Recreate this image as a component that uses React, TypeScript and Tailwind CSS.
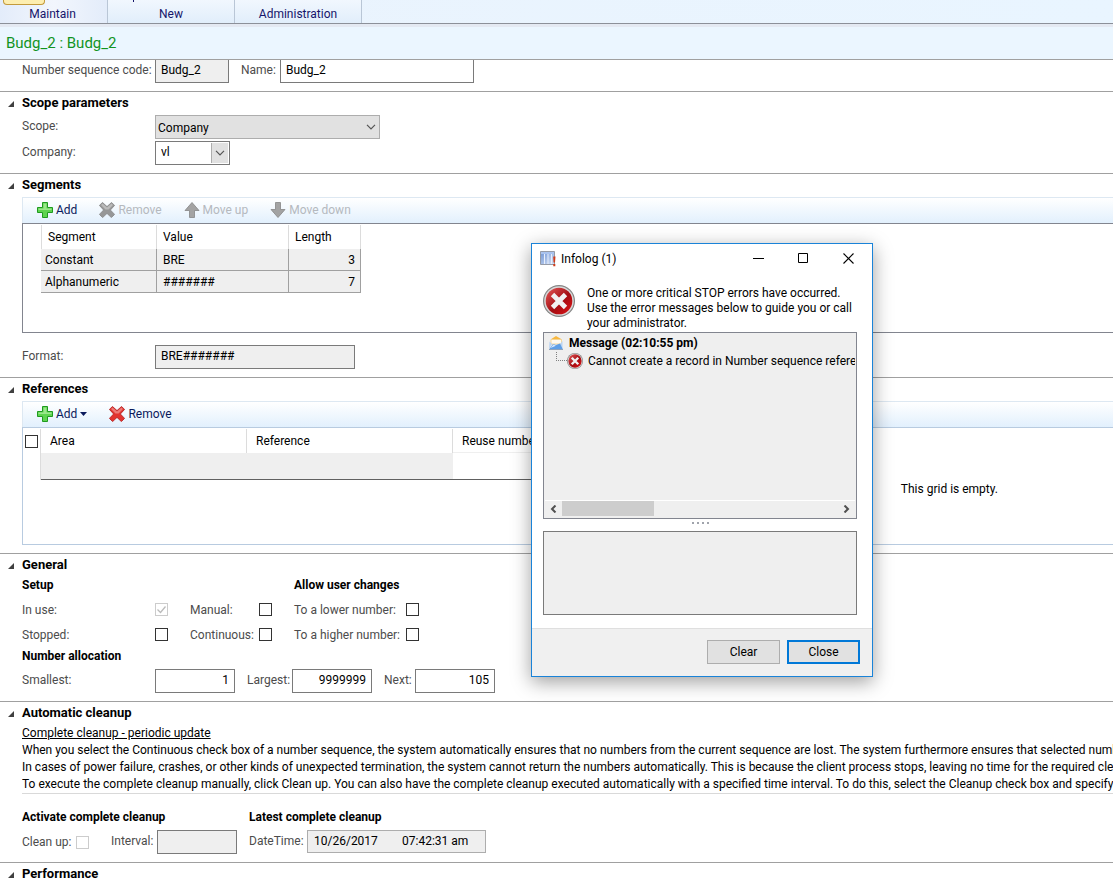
import { useState } from 'react';
import type { ReactNode } from 'react';

const segments = [
    { segment: 'Constant', value: 'BRE', length: 3 },
    { segment: 'Alphanumeric', value: '#######', length: 7 },
];

const cleanupText = [
    'When you select the Continuous check box of a number sequence, the system automatically ensures that no numbers from the current sequence are lost. The system furthermore ensures that selected numbers',
    'In cases of power failure, crashes, or other kinds of unexpected termination, the system cannot return the numbers automatically. This is because the client process stops, leaving no time for the required cleanup',
    'To execute the complete cleanup manually, click Clean up. You can also have the complete cleanup executed automatically with a specified time interval. To do this, select the Cleanup check box and specify a',
];

const inputClass = 'h-6 border border-[#7a7a7a] px-[5px] pb-[2px] text-black outline-none';

function PlusIcon() {
    return (
        <svg width="16" height="16" viewBox="0 0 16 16">
            <path d="M5.5.5h5v5h5v5h-5v5h-5v-5h-5v-5h5z" fill="#5fd44f" stroke="#1f9a1f" />
            <path d="M6.5 1.5h3v5h5v1.5h-13v-1.5h5z" fill="#b5f0a5" opacity=".7" />
        </svg>
    );
}

function CrossIcon({ disabled }: { disabled?: boolean }) {
    return (
        <svg width="16" height="16" viewBox="0 0 16 16">
            <path
                d="M3.5.5 8 4.600 12.500.5 15.600 3.400 11.400 8l4.200 4.400-3.200 3.200L8 11.400l-4.400 4.200-3.200-3.200L4.600 8 .4 3.400z"
                fill={disabled ? '#979797' : '#e2332f'}
                stroke={disabled ? '#858585' : '#b01d1d'}
                strokeWidth=".8"
                strokeLinejoin="round"
            />
            <path d="M3.500 1.500 8 5.600l4.500-4.100 1.500 1.500-4.500 4.500h-3L2 3z" fill="#fff" opacity=".35" />
        </svg>
    );
}

function ArrowIcon({ down }: { down?: boolean }) {
    return (
        <svg width="16" height="16" viewBox="0 0 16 16">
            <path
                d={down ? 'M5.500.5h5v7h4.500L8 15.500 1 7.500h4.500z' : 'M5.500 15.500h5v-7h4.500L8 .5 1 8.500h4.500z'}
                fill="#a3a3a3"
                stroke="#858585"
                strokeWidth=".8"
            />
        </svg>
    );
}

function StopIcon({ size }: { size: number }) {
    return (
        <svg width={size} height={size} viewBox="0 0 32 32" className="shrink-0">
            <defs>
                <linearGradient id={`stop${size}`} x1="0" y1="0" x2="1" y2="1">
                    <stop offset="0" stopColor="#e65a5a" />
                    <stop offset=".55" stopColor="#a30d12" />
                    <stop offset="1" stopColor="#e01216" />
                </linearGradient>
            </defs>
            <circle cx="16" cy="16" r="16" fill="#858585" />
            <circle cx="16" cy="16" r="14.800" fill="#d9d9d9" />
            <circle cx="16" cy="16" r="13.300" fill={`url(#stop${size})`} />
            <path d="m9.500 9.500 13 13M22.500 9.500l-13 13" stroke="#f1f1f1" strokeWidth="4.800" />
        </svg>
    );
}

function LogIcon() {
    return (
        <svg width="16" height="16" viewBox="0 0 16 16">
            <defs>
                <linearGradient id="log" x1="0" y1="0" x2="1" y2="1">
                    <stop offset="0" stopColor="#6f93d2" />
                    <stop offset="1" stopColor="#d6e3f8" />
                </linearGradient>
            </defs>
            <path d="M.5.5h14v13H.5z" fill="url(#log)" stroke="#969ba6" />
            <path d="M1 1h13v2H1z" fill="#a9c3ef" />
            <path d="M4.500 3v10M8 3v10M11.500 3v10" stroke="#e8effb" />
            <path d="M13.200 5.500h2.300L15 11.500h-1.500zM13.300 13h2v2.200h-2z" fill="#cf3d1c" />
        </svg>
    );
}

function MessageIcon() {
    return (
        <svg width="16" height="16" viewBox="0 0 16 16" className="shrink-0">
            <path d="M2.500 4.500 8 1l6 3.500z" fill="#f7b73f" />
            <path d="M3 4.500h10.500V9H3z" fill="#fffaf0" stroke="#f2cf86" strokeWidth=".8" />
            <path d="m1.500 6.500 2.500 2.500-3 5zM14.500 6v7.500L12 9z" fill="#b9d3f3" />
            <path d="M1 14.500 5 9l3 1 4-1.500 3 6z" fill="#5f9fe6" />
            <path d="M2.500 13 5.500 9.500 8 10.800l3-1.300z" fill="#d9eaff" />
            <path d="M1 14.500h14" stroke="#8fa3bb" />
        </svg>
    );
}

function Chevron({ className }: { className?: string }) {
    return (
        <svg width="10" height="6" viewBox="0 0 10 6" className={className}>
            <path d="m1 .8 4 4 4-4" fill="none" stroke="#555" strokeWidth="1.200" />
        </svg>
    );
}

function Section({ title, children }: { title: string; children?: ReactNode }) {
    return (
        <section className="border-t border-[#a0a0a0] pb-2">
            <h2 className="flex h-5 items-center gap-2 pt-[2px] pl-2 text-[13px] font-bold text-black">
                <svg width="6" height="6" viewBox="0 0 6 6" className="mt-[2px]">
                    <path d="M6 0v6H0z" fill="#404040" />
                </svg>
                {title}
            </h2>
            <div className="pl-[22px]">{children}</div>
        </section>
    );
}

type CheckBoxProps = { id: string; label?: string; disabled?: boolean; defaultChecked?: boolean };

function CheckBox({ id, label, disabled, defaultChecked }: CheckBoxProps) {
    return (
        <span className="grid size-[13px] shrink-0">
            <input
                id={id}
                type="checkbox"
                aria-label={label}
                disabled={disabled}
                defaultChecked={defaultChecked}
                className="peer col-start-1 row-start-1 size-[13px] appearance-none border border-[#333] bg-white disabled:border-[#ccc]"
            />
            <svg
                viewBox="0 0 13 13"
                className="pointer-events-none invisible col-start-1 row-start-1 size-[13px] text-[#333] peer-checked:visible peer-disabled:text-[#bbb]"
            >
                <path d="m2.500 6.500 3 3 5-6" fill="none" stroke="currentColor" strokeWidth="1.300" />
            </svg>
        </span>
    );
}

function ToolButton({ icon, label, disabled, menu }: { icon: ReactNode; label: string; disabled?: boolean; menu?: boolean }) {
    return (
        <button type="button" disabled={disabled} className="flex items-center gap-[3px] text-[#0a1a5c] disabled:text-[#b5b9be]">
            {icon}
            <span>{label}</span>
            {menu && (
                <svg width="7" height="4" viewBox="0 0 7 4">
                    <path d="M0 0h7L3.500 4z" fill="#0a1a5c" />
                </svg>
            )}
        </button>
    );
}

function Toolbar({ children }: { children: ReactNode }) {
    return (
        <div className="mt-[3px] flex h-[26px] items-center gap-[22px] border-t border-l border-[#dde8f2] bg-linear-to-b from-white to-[#e2f0fd] pb-[2px] pl-[14px]">
            {children}
        </div>
    );
}

function Infolog({ onClose }: { onClose: () => void }) {
    return (
        <div
            role="dialog"
            aria-labelledby="infolog-title"
            className="absolute top-[243px] left-[531px] w-[342px] border border-[#1a83d8] bg-white text-black shadow-[0_5px_18px_rgba(0,0,0,0.38)]"
        >
            <div className="flex h-[29px] items-center pr-px pl-2">
                <LogIcon />
                <h1 id="infolog-title" className="ml-[5px] flex-1">Infolog (1)</h1>
                <button type="button" aria-label="Minimize" className="flex w-[45px] justify-center">
                    <svg width="11" height="11" viewBox="0 0 11 11"><path d="M0 5.500h11" stroke="#000" /></svg>
                </button>
                <button type="button" aria-label="Maximize" className="flex w-[45px] justify-center">
                    <svg width="11" height="11" viewBox="0 0 11 11"><path d="M.5.5h9v9h-9z" fill="none" stroke="#000" /></svg>
                </button>
                <button type="button" aria-label="Close window" onClick={onClose} className="flex w-[45px] justify-center">
                    <svg width="11" height="11" viewBox="0 0 11 11"><path d="m.5.5 10 10M10.500.5l-10 10" stroke="#000" strokeWidth="1.100" /></svg>
                </button>
            </div>

            <div className="flex flex-col pr-[15px] pl-[11px]">
                <div className="flex gap-3 pt-3 pb-px">
                    <StopIcon size={32} />
                    <p className="pt-px leading-[15px] whitespace-nowrap">
                        One or more critical STOP errors have occurred.<br />
                        Use the error messages below to guide you or call<br />
                        your administrator.
                    </p>
                </div>

                <div className="flex h-[187px] flex-col border border-[#82858f] bg-[#efefef] px-px pt-px pb-[2px]">
                    <div className="flex h-[18px] items-center gap-[5px] pl-[3px]">
                        <MessageIcon />
                        <span className="font-bold">Message (02:10:55 pm)</span>
                    </div>
                    <div className="flex h-[18px] items-center overflow-hidden pl-[11px] whitespace-nowrap">
                        <span className="mb-[9px] h-[9px] w-[11px] shrink-0 border-b border-l border-dotted border-[#808080]" />
                        <StopIcon size={16} />
                        <span className="ml-[5px]">Cannot create a record in Number sequence references</span>
                    </div>
                    <div className="mt-auto flex h-4 items-center border-t border-white pr-[5px] pl-[5px]">
                        <svg width="7" height="8" viewBox="0 0 7 8"><path d="M5.500.5 2 4l3.500 3.500" fill="none" stroke="#505050" strokeWidth="2" /></svg>
                        <div className="ml-[5px] h-[15px] w-[92px] bg-[#cdcdcd]" />
                        <svg width="7" height="8" viewBox="0 0 7 8" className="ml-auto"><path d="M1.500.5 5 4 1.500 7.500" fill="none" stroke="#505050" strokeWidth="2" /></svg>
                    </div>
                </div>

                <div className="flex h-3 items-center justify-center gap-[3px] pb-1">
                    <i className="size-[2px] bg-[#a0a4ac]" />
                    <i className="size-[2px] bg-[#a0a4ac]" />
                    <i className="size-[2px] bg-[#a0a4ac]" />
                    <i className="size-[2px] bg-[#a0a4ac]" />
                </div>

                <textarea
                    readOnly
                    aria-label="Message details"
                    className="mb-[13px] block h-[84px] w-full resize-none border border-[#7a7a7a] bg-[#efefef] outline-none"
                />
            </div>

            <div className="flex h-12 justify-end gap-[7px] border-t border-[#dfdfdf] bg-[#f0f0f0] pt-[11px] pr-3">
                <button type="button" className="h-6 w-[73px] border border-[#adadad] bg-[#e1e1e1]">Clear</button>
                <button type="button" onClick={onClose} className="h-6 w-[73px] border-2 border-[#0078d7] bg-[#e1e1e1]">Close</button>
            </div>
        </div>
    );
}

export default function App() {
    const [infologOpen, setInfologOpen] = useState(true);

    return (
        <div className="relative h-screen overflow-hidden bg-white font-['Roboto','Open_Sans',sans-serif] text-[12px] leading-4 text-[#4c4c4c]">
            {/* Ribbon */}
            <nav className="flex h-6 border-b border-[#8c9099] bg-linear-to-r from-[#eaf3fd] to-[#e9f5ff] text-[#15156b]">
                <div className="flex w-[108px] flex-col border-r border-[#b9c6d6] bg-linear-to-r from-[#e3ecfa] via-[#f2f6fd] to-[#e3ecfa] pl-[3px]">
                    <span className="h-[5px] w-[42px] rounded-b border border-t-0 border-[#c39a3c] bg-[#fdeeb0]" />
                    <a href="#maintain" className="mt-px mr-[5px] text-center">Maintain</a>
                </div>
                <div className="flex w-[127px] flex-col border-r border-[#b9c6d6] bg-linear-to-b from-[#f1f7fe] to-[#e1eefb]">
                    {/* foot of the button caption scrolled out above */}
                    <span className="mb-1 ml-[25px] h-[2px] w-px bg-[#15156b]" />
                    <a href="#new" className="text-center">New</a>
                </div>
                <div className="w-[127px] border-r border-[#b9c6d6] bg-linear-to-b from-[#f1f7fe] to-[#e1eefb] pt-[6px] text-center">
                    <a href="#administration">Administration</a>
                </div>
            </nav>
            <header className="flex h-9 items-center border-t-[3px] border-b border-t-[#e4e9f2] border-b-[#a0a0a0] bg-[#ebf6ff] pl-[6px] text-[15px] text-[#12941f]">
                Budg_2 : Budg_2
            </header>

            <form onSubmit={(e) => e.preventDefault()}>
                <div className="flex items-start pb-2 pl-[22px]">
                    <label htmlFor="code" className="w-[133px] pt-[2px] whitespace-nowrap">Number sequence code:</label>
                    <input id="code" readOnly defaultValue="Budg_2" className="h-[23px] w-[74px] border border-t-0 border-[#7a7a7a] bg-[#efefef] px-[5px] pb-[2px] text-black outline-none" />
                    <label htmlFor="name" className="ml-3 w-[39px] pt-[2px]">Name:</label>
                    <input id="name" defaultValue="Budg_2" className="h-[23px] w-[194px] border border-t-0 border-[#7a7a7a] px-[5px] pb-[2px] text-black outline-none" />
                </div>

                <Section title="Scope parameters">
                    <div className="flex flex-col gap-[2px] pt-[3px]">
                        <div className="flex items-center">
                            <label htmlFor="scope" className="w-[133px] pb-[2px]">Scope:</label>
                            <div className="grid w-[225px] items-center">
                                <select id="scope" className="col-start-1 row-start-1 h-6 appearance-none border border-[#adadad] bg-[#e1e1e1] px-[2px] pt-px text-black outline-none">
                                    <option>Company</option>
                                </select>
                                <Chevron className="pointer-events-none col-start-1 row-start-1 mr-1 justify-self-end" />
                            </div>
                        </div>
                        <div className="flex items-center">
                            <label htmlFor="company" className="w-[133px] pb-[2px]">Company:</label>
                            <div className="flex h-6 w-[75px] border border-[#7a7a7a] p-px">
                                <input id="company" defaultValue="vl" className="min-w-0 flex-1 px-1 pb-[2px] text-black outline-none" />
                                <button type="button" aria-label="Show companies" className="flex w-[17px] items-center justify-center border-l border-[#adadad] bg-[#e1e1e1]">
                                    <Chevron />
                                </button>
                            </div>
                        </div>
                    </div>
                </Section>

                <Section title="Segments">
                    <Toolbar>
                        <ToolButton icon={<PlusIcon />} label="Add" />
                        <ToolButton icon={<CrossIcon disabled />} label="Remove" disabled />
                        <ToolButton icon={<ArrowIcon />} label="Move up" disabled />
                        <ToolButton icon={<ArrowIcon down />} label="Move down" disabled />
                    </Toolbar>
                    <div className="h-[110px] border-y border-l border-[#82858f] pt-px pl-[18px]">
                        <table className="w-[320px] table-fixed border-separate border-spacing-0 text-left text-black">
                            <thead>
                                <tr className="h-6">
                                    <th className="w-[116px] border-r border-l border-[#dcdcdc] pl-[6px] font-normal">Segment</th>
                                    <th className="w-[132px] border-r border-[#dcdcdc] pl-[6px] font-normal">Value</th>
                                    <th className="border-r border-[#dcdcdc] pl-[6px] font-normal">Length</th>
                                </tr>
                            </thead>
                            <tbody>
                                {segments.map((row) => (
                                    <tr key={row.segment} className="h-[22px] bg-[#efefef]">
                                        <td className="border-r border-b border-[#a0a0a0] pl-1">{row.segment}</td>
                                        <td className="border-r border-b border-[#a0a0a0] pl-[6px]">{row.value}</td>
                                        <td className="border-r border-b border-[#a0a0a0] pr-[5px] text-right">{row.length}</td>
                                    </tr>
                                ))}
                            </tbody>
                        </table>
                    </div>
                    <div className="mt-3 flex items-center">
                        <label htmlFor="format" className="w-[133px] pb-[2px]">Format:</label>
                        <input id="format" readOnly defaultValue="BRE#######" className={`${inputClass} w-[200px] bg-[#efefef]`} />
                    </div>
                </Section>

                <Section title="References">
                    <Toolbar>
                        <ToolButton icon={<PlusIcon />} label="Add" menu />
                        <ToolButton icon={<CrossIcon />} label="Remove" />
                    </Toolbar>
                    <div className="relative h-[118px] border-y border-l border-[#b8cbe0] pt-px">
                        <table className="w-[636px] table-fixed border-separate border-spacing-0 text-left text-black">
                            <thead>
                                <tr className="h-6">
                                    <th className="w-[18px] border-r border-[#dcdcdc] pl-[2px]">
                                        <CheckBox id="select-all" label="Select all" />
                                    </th>
                                    <th className="w-[206px] border-r border-[#dcdcdc] pl-[9px] font-normal">Area</th>
                                    <th className="w-[206px] border-r border-[#dcdcdc] pl-[9px] font-normal">Reference</th>
                                    <th className="border-b border-[#efefef] pl-[9px] font-normal">Reuse numbers</th>
                                </tr>
                            </thead>
                            <tbody>
                                <tr className="h-[27px]">
                                    <td className="border-r border-[#dcdcdc]" />
                                    <td className="border-b border-[#606060] bg-[#efefef]" />
                                    <td className="border-b border-[#606060] bg-[#efefef]" />
                                    <td className="border-b border-[#606060]" />
                                </tr>
                            </tbody>
                        </table>
                        <p className="absolute top-[53px] right-[115px] text-black">This grid is empty.</p>
                    </div>
                </Section>

                <Section title="General">
                    <div className="flex h-[22px] items-center font-bold text-black">
                        <h3 className="w-[272px]">Setup</h3>
                        <h3>Allow user changes</h3>
                    </div>
                    <div className="flex h-[25px] items-center pt-[2px]">
                        <label htmlFor="in-use" className="w-[133px]">In use:</label>
                        <CheckBox id="in-use" disabled defaultChecked />
                        <label htmlFor="manual" className="ml-[22px] w-[69px]">Manual:</label>
                        <CheckBox id="manual" />
                        <label htmlFor="lower" className="ml-[22px] w-28 whitespace-nowrap">To a lower number:</label>
                        <CheckBox id="lower" />
                    </div>
                    <div className="flex h-[25px] items-center pt-[2px]">
                        <label htmlFor="stopped" className="w-[133px]">Stopped:</label>
                        <CheckBox id="stopped" />
                        <label htmlFor="continuous" className="ml-[22px] w-[69px]">Continuous:</label>
                        <CheckBox id="continuous" />
                        <label htmlFor="higher" className="ml-[22px] w-28 whitespace-nowrap">To a higher number:</label>
                        <CheckBox id="higher" />
                    </div>
                    <h3 className="flex h-5 items-center font-bold text-black">Number allocation</h3>
                    <div className="mt-[3px] flex items-center">
                        <label htmlFor="smallest" className="w-[133px] pb-[2px]">Smallest:</label>
                        <input id="smallest" defaultValue="1" className={`${inputClass} w-20 text-right`} />
                        <label htmlFor="largest" className="ml-3 w-[45px] pb-[2px]">Largest:</label>
                        <input id="largest" defaultValue="9999999" className={`${inputClass} w-20 text-right`} />
                        <label htmlFor="next" className="ml-3 w-[31px] pb-[2px]">Next:</label>
                        <input id="next" defaultValue="105" className={`${inputClass} w-20 text-right`} />
                    </div>
                </Section>

                <Section title="Automatic cleanup">
                    <div className="overflow-hidden border-b border-[#d9d9d9] pt-[3px] leading-[17px] whitespace-nowrap text-black">
                        <a href="#periodic-update" className="underline">Complete cleanup - periodic update</a>
                        {cleanupText.map((line) => (
                            <p key={line}>{line}</p>
                        ))}
                    </div>
                    <div className="mt-[13px] flex">
                        <div className="w-[227px]">
                            <h3 className="flex h-5 items-center font-bold text-black">Activate complete cleanup</h3>
                            <div className="mt-[3px] flex items-center">
                                <label htmlFor="clean-up" className="w-[54px] whitespace-nowrap">Clean up:</label>
                                <CheckBox id="clean-up" disabled />
                                <label htmlFor="interval" className="ml-[22px] w-[46px] pb-[2px]">Interval:</label>
                                <input id="interval" readOnly className={`${inputClass} w-20 bg-[#efefef]`} />
                            </div>
                        </div>
                        <div>
                            <h3 className="flex h-5 items-center font-bold text-black">Latest complete cleanup</h3>
                            <div className="mt-[3px] flex items-center">
                                <label htmlFor="date" className="w-[58px] pb-[2px]">DateTime:</label>
                                <div className="flex h-[23px] w-[179px] items-center border border-[#adadad] bg-[#efefef] pb-px pl-[6px] text-black">
                                    <input id="date" readOnly defaultValue="10/26/2017" className="w-[88px] outline-none" />
                                    <input aria-label="Time" readOnly defaultValue="07:42:31 am" className="w-20 outline-none" />
                                </div>
                            </div>
                        </div>
                    </div>
                </Section>

                <Section title="Performance" />
            </form>

            {infologOpen && <Infolog onClose={() => setInfologOpen(false)} />}
        </div>
    );
}
